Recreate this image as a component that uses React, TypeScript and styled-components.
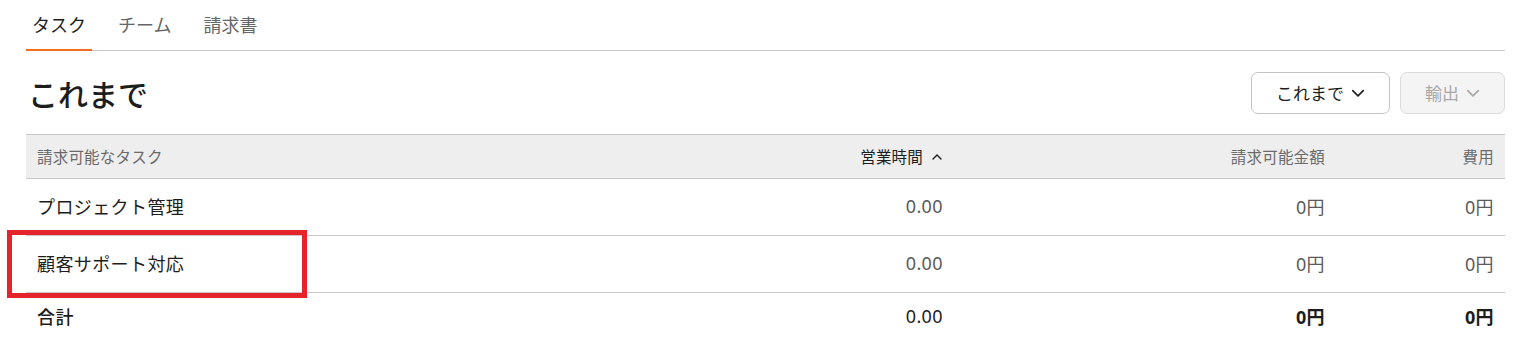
import React from "react";
import styled, { createGlobalStyle } from "styled-components";

const Global = createGlobalStyle`
  body { margin: 0; background: #fff; font-family: "Noto Sans", "Noto Sans CJK JP", sans-serif; color: #1d1d1b; }
  * { box-sizing: border-box; }
`;

const Page = styled.div`
  padding: 0 8px 0 26px;
  position: relative;
`;

const Tabs = styled.nav`
  display: flex;
  gap: 20px;
  border-bottom: 1px solid #c8c8c8;
  height: 51px;
  align-items: stretch;
`;

const Tab = styled.div<{ $active?: boolean }>`
  display: flex;
  align-items: center;
  padding: 0 6px 2px 6px;
  font-size: 18px;
  color: ${(p) => (p.$active ? "#1d1d1b" : "#666")};
  border-bottom: 2px solid ${(p) => (p.$active ? "#f36c21" : "transparent")};
  margin-bottom: -1px;
`;

const TitleRow = styled.div`
  display: flex;
  align-items: center;
  justify-content: space-between;
  height: 83px;
`;

const Title = styled.h1`
  margin: 0 0 0 2px;
  font-size: 30px;
  font-weight: 500;
  padding-top: 0;
  color: #1d1d1b;
`;

const Actions = styled.div`
  display: flex;
  gap: 10px;
`;

const Button = styled.button<{ $disabled?: boolean }>`
  height: 42px;
  display: flex;
  align-items: center;
  gap: 7px;
  padding: 0 24px;
  border-radius: 7px;
  border: 1px solid ${(p) => (p.$disabled ? "#dcdcdc" : "#c4c4c4")};
  background: ${(p) => (p.$disabled ? "#f4f4f4" : "#fff")};
  color: ${(p) => (p.$disabled ? "#a8a8a8" : "#1d1d1b")};
  font-family: inherit;
  font-size: 17px;
`;

const Table = styled.div`
  border-top: 1px solid #c8c8c8;
`;

const Row = styled.div<{ $head?: boolean; $total?: boolean }>`
  display: grid;
  grid-template-columns: 1fr 428px 382px 169px;
  align-items: center;
  height: ${(p) => (p.$head ? "44px" : p.$total ? "48px" : "57px")};
  padding-bottom: ${(p) => (p.$head ? "0" : "3px")};
  background: ${(p) => (p.$head ? "#eeeeee" : "transparent")};
  border-bottom: ${(p) => (p.$total ? "none" : "1px solid #c8c8c8")};
`;

const Cell = styled.div<{ $right?: boolean; $head?: boolean; $active?: boolean; $muted?: boolean; $bold?: boolean }>`
  padding: 0 11px;
  font-size: ${(p) => (p.$head ? "15.5px" : "18px")};
  letter-spacing: ${(p) => (p.$head ? "0.2px" : "0.4px")};
  color: ${(p) => (p.$head ? (p.$active ? "#1d1d1b" : "#6a6a6a") : p.$muted ? "#5a5a5a" : "#1d1d1b")};
  font-weight: ${(p) => (p.$bold ? 700 : 400)};
  display: flex;
  align-items: center;
  justify-content: ${(p) => (p.$right ? "flex-end" : "flex-start")};
  gap: 8px;
`;

const TotalLabel = styled(Cell)`
  font-weight: 500;
`;

const Highlight = styled.div`
  position: absolute;
  left: 7px;
  top: 230px;
  width: 300px;
  height: 68px;
  border: 5px solid #e3242b;
  pointer-events: none;
`;

const Chevron = ({ up, color, size = 12 }: { up?: boolean; color: string; size?: number }) => (
  <svg width={size} height={size} viewBox="0 0 12 12" fill="none">
    <path d={up ? "M2 8 L6 4 L10 8" : "M1.5 4 L6 8.5 L10.5 4"} stroke={color} strokeWidth="1.4" strokeLinecap="round" strokeLinejoin="round" />
  </svg>
);

const rows = [
  { name: "プロジェクト管理", hours: "0.00", amount: "0円", cost: "0円" },
  { name: "顧客サポート対応", hours: "0.00", amount: "0円", cost: "0円" },
];

export default function App() {
  return (
    <Page>
      <Global />
      <Tabs>
        <Tab $active>タスク</Tab>
        <Tab>チーム</Tab>
        <Tab>請求書</Tab>
      </Tabs>
      <TitleRow>
        <Title>これまで</Title>
        <Actions>
          <Button>
            これまで <Chevron color="#1d1d1b" size={14} />
          </Button>
          <Button $disabled>
            輸出 <Chevron color="#a8a8a8" size={14} />
          </Button>
        </Actions>
      </TitleRow>
      <Table>
        <Row $head>
          <Cell $head>請求可能なタスク</Cell>
          <Cell $head $right $active>
            営業時間 <Chevron up color="#1d1d1b" />
          </Cell>
          <Cell $head $right>請求可能金額</Cell>
          <Cell $head $right>費用</Cell>
        </Row>
        {rows.map((r) => (
          <Row key={r.name}>
            <Cell>{r.name}</Cell>
            <Cell $right $muted>{r.hours}</Cell>
            <Cell $right $muted>{r.amount}</Cell>
            <Cell $right $muted>{r.cost}</Cell>
          </Row>
        ))}
        <Row $total>
          <TotalLabel>合計</TotalLabel>
          <Cell $right>0.00</Cell>
          <Cell $right $bold>0円</Cell>
          <Cell $right $bold>0円</Cell>
        </Row>
      </Table>
      <Highlight />
    </Page>
  );
}
